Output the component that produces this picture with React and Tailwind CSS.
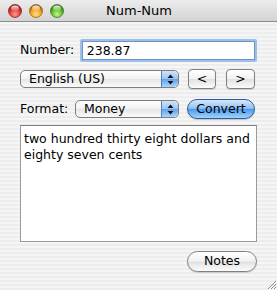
import React from "react";

const font = { fontFamily: '"DejaVu Sans", "Liberation Sans", sans-serif' };

function Light({ c1, c2, c3, rim }) {
	const id = c1.replace("#", "g");
	return (
		<svg width="14" height="14" viewBox="0 0 14 14">
			<defs>
				<radialGradient id={id} cx="50%" cy="75%" r="65%">
					<stop offset="0%" stopColor={c1} />
					<stop offset="60%" stopColor={c2} />
					<stop offset="100%" stopColor={c3} />
				</radialGradient>
				<linearGradient id={id + "h"} x1="0" y1="0" x2="0" y2="1">
					<stop offset="0%" stopColor="#fff" stopOpacity="0.9" />
					<stop offset="100%" stopColor="#fff" stopOpacity="0.1" />
				</linearGradient>
			</defs>
			<circle cx="7" cy="7" r="6.5" fill={`url(#${id})`} stroke={rim} strokeWidth="0.8" />
			<ellipse cx="7" cy="4.2" rx="4" ry="2.6" fill={`url(#${id}h)`} />
		</svg>
	);
}

function Stepper() {
	return (
		<div className="w-[17px] self-stretch rounded-r-[5px] border-l border-[#5a7fb0] bg-[linear-gradient(#cfe3f8_0%,#9cc6f2_48%,#5ea4ee_52%,#a8d6fc_100%)] flex items-center justify-center">
			<svg width="7" height="11" viewBox="0 0 7 11">
				<path d="M3.5 0.5 L6.5 4 L0.5 4 Z" fill="#111" />
				<path d="M3.5 10.5 L6.5 7 L0.5 7 Z" fill="#111" />
			</svg>
		</div>
	);
}

function Popup({ label, className }) {
	return (
		<div
			className={`h-[18px] flex items-stretch rounded-[5px] border border-[#7d7d7d] bg-[linear-gradient(#ffffff_0%,#f1f1f1_50%,#e6e6e6_52%,#fafafa_100%)] ${className}`}
		>
			<span className="flex-1 pl-[8px] leading-[16px] text-[12.5px] text-black">{label}</span>
			<Stepper />
		</div>
	);
}

const grayBtn =
	"border border-[#808080] bg-[linear-gradient(#ffffff_0%,#f2f2f2_48%,#e1e1e1_52%,#fbfbfb_100%)] text-black text-[12.5px] flex items-center justify-center shadow-[0_1px_1px_rgba(0,0,0,0.15)]";

export default function App() {
	return (
		<div
			style={font}
			className="w-[277px] h-[290px] flex flex-col overflow-hidden relative bg-[repeating-linear-gradient(0deg,#ededed_0px,#ededed_2px,#f5f5f5_2px,#f5f5f5_4px)]"
		>
			{/* Title bar */}
			<div className="h-[22px] shrink-0 flex items-center relative border-b border-[#8c8c8c] bg-[linear-gradient(#ececec,#d3d3d3)]">
				<div className="flex gap-[7px] pl-[8px]">
					<Light c1="#ff9a90" c2="#e5403a" c3="#8e1410" rim="#8a2a26" />
					<Light c1="#ffe08a" c2="#f5a51f" c3="#a45c06" rim="#9a6414" />
					<Light c1="#c9f48c" c2="#62c02c" c3="#2c7a0c" rim="#3c7a22" />
				</div>
				<div className="absolute inset-0 flex items-center justify-center text-[13px] text-black pl-[1px]">
					Num-Num
				</div>
			</div>

			<div className="flex flex-col px-[20px]">
				{/* Number row */}
				<div className="flex items-center mt-[16px] h-[24px]">
					<span className="w-[60px] text-[12.5px] text-black">Number:</span>
					<div className="w-[178px] h-[23px] rounded-[2px] p-[2px] bg-[#9cc0ea]">
						<div className="h-full bg-white border border-[#6f93c4] pl-[4px] text-[12.5px] leading-[17px] text-black">
							238.87
						</div>
					</div>
				</div>

				{/* Language row */}
				<div className="flex items-center mt-[7px] h-[20px]">
					<Popup label="English (US)" className="w-[159px]" />
					<div className={`${grayBtn} ml-[9px] w-[28px] h-[20px] rounded-[4px]`}>&lt;</div>
					<div className={`${grayBtn} ml-[10px] w-[29px] h-[20px] rounded-[4px]`}>&gt;</div>
				</div>

				{/* Format row */}
				<div className="flex items-center mt-[10px] h-[20px]">
					<span className="w-[55px] text-[12.5px] text-black">Format:</span>
					<Popup label="Money" className="w-[104px]" />
					<div className="ml-[8px] w-[68px] h-[20px] rounded-full border border-[#2d5c9e] bg-[linear-gradient(#d6e8fb_0%,#93c1f1_46%,#4d9aed_52%,#9fd5fd_100%)] text-[12.5px] text-black flex items-center justify-center shadow-[0_1px_1px_rgba(0,0,0,0.2)]">
						Convert
					</div>
				</div>

				{/* Output */}
				<div className="mt-[6px] w-[237px] h-[117px] bg-white border border-[#9a9a9a] border-t-[#7b7b7b] pl-[3px] pt-[5px] text-[12.5px] leading-[16px] text-black">
					two hundred thirty eight dollars and eighty seven cents
				</div>

				<div className="flex justify-end mt-[9px] pr-0">
					<div className={`${grayBtn} w-[70px] h-[21px] rounded-full`}>Notes</div>
				</div>
			</div>

			{/* resize grip */}
			<svg className="absolute right-0 bottom-0" width="11" height="11" viewBox="0 0 11 11">
				<path d="M10 2 L2 10 M10 5 L5 10 M10 8 L8 10" stroke="#8a8a8a" strokeWidth="1" />
				<path d="M11 3 L3 11 M11 6 L6 11 M11 9 L9 11" stroke="#fff" strokeWidth="1" />
			</svg>
		</div>
	);
}
